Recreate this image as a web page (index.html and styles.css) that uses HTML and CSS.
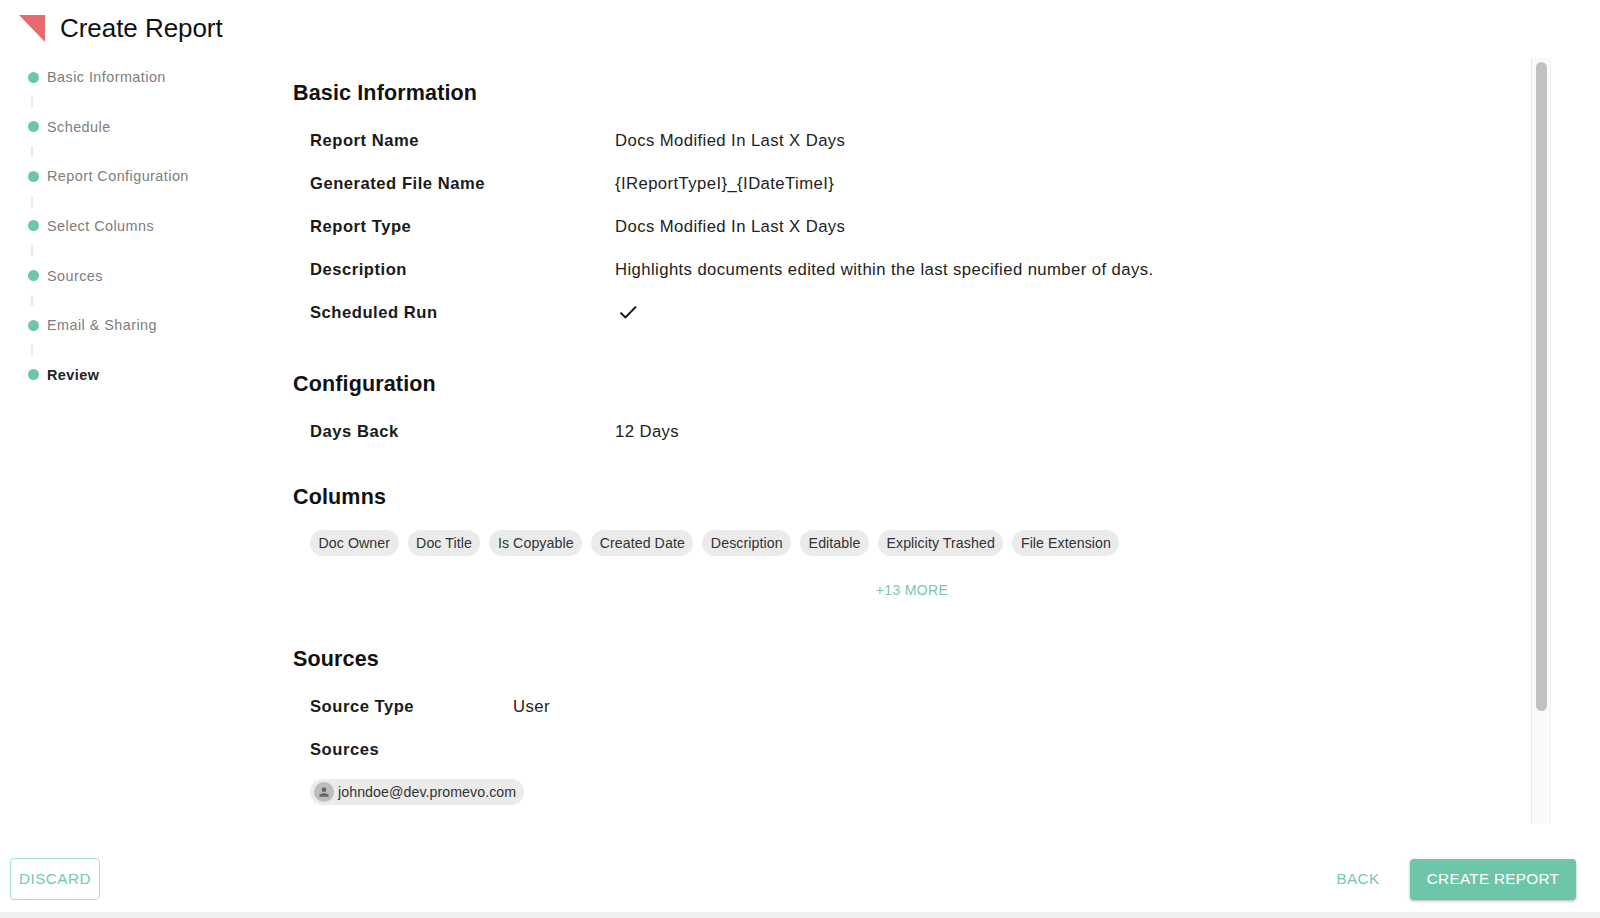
FILE: index.html
```html
<!DOCTYPE html>
<html lang="en">
<head>
<meta charset="utf-8">
<title>Create Report</title>
<link rel="stylesheet" href="styles.css">
</head>
<body>
<div class="page">
  <header class="header">
    <svg class="logo" width="26" height="27" viewBox="0 0 26 27"><polygon points="0,0 26,0 26,27" fill="#e96a6a"/></svg>
    <h1 class="title">Create Report</h1>
  </header>
  <div class="body">
    <nav class="steps">
      <div class="step"><span class="dot"></span>Basic Information</div>
      <div class="line"></div>
      <div class="step"><span class="dot"></span>Schedule</div>
      <div class="line"></div>
      <div class="step"><span class="dot"></span>Report Configuration</div>
      <div class="line"></div>
      <div class="step"><span class="dot"></span>Select Columns</div>
      <div class="line"></div>
      <div class="step"><span class="dot"></span>Sources</div>
      <div class="line"></div>
      <div class="step"><span class="dot"></span>Email &amp; Sharing</div>
      <div class="line"></div>
      <div class="step active"><span class="dot"></span>Review</div>
    </nav>
    <main class="content">
      <section class="section s-basic">
        <h2>Basic Information</h2>
        <div class="row"><div class="label">Report Name</div><div class="value">Docs Modified In Last X Days</div></div>
        <div class="row"><div class="label">Generated File Name</div><div class="value">{IReportTypeI}_{IDateTimeI}</div></div>
        <div class="row"><div class="label">Report Type</div><div class="value">Docs Modified In Last X Days</div></div>
        <div class="row"><div class="label">Description</div><div class="value">Highlights documents edited within the last specified number of days.</div></div>
        <div class="row"><div class="label">Scheduled Run</div><div class="value"><svg class="check" width="24" height="24" viewBox="0 0 24 24"><path d="M4.5 12.6 9.4 17.4 20 6.6" fill="none" stroke="#111" stroke-width="2"/></svg></div></div>
      </section>
      <section class="section s-config">
        <h2>Configuration</h2>
        <div class="row"><div class="label">Days Back</div><div class="value">12 Days</div></div>
      </section>
      <section class="section s-columns">
        <h2>Columns</h2>
        <div class="chips">
          <span class="chip">Doc Owner</span>
          <span class="chip">Doc Title</span>
          <span class="chip">Is Copyable</span>
          <span class="chip">Created Date</span>
          <span class="chip">Description</span>
          <span class="chip">Editable</span>
          <span class="chip">Explicity Trashed</span>
          <span class="chip">File Extension</span>
        </div>
        <div class="more">+13 MORE</div>
      </section>
      <section class="section s-sources">
        <h2>Sources</h2>
        <div class="row narrow"><div class="label">Source Type</div><div class="value">User</div></div>
        <div class="row narrow"><div class="label">Sources</div></div>
        <div class="chips user-chips">
          <span class="chip user"><span class="avatar"><svg width="14" height="14" viewBox="0 0 24 24"><path d="M12 12a4 4 0 1 0 0-8 4 4 0 0 0 0 8Zm0 2c-2.7 0-8 1.3-8 4v2h16v-2c0-2.7-5.3-4-8-4Z" fill="#666"/></svg></span>johndoe@dev.promevo.com</span>
        </div>
      </section>
    </main>
    <div class="track"><div class="thumb"></div></div>
  </div>
  <footer class="footer">
    <button class="btn outline">DISCARD</button>
    <div class="footer-right">
      <button class="btn text">BACK</button>
      <button class="btn primary">CREATE REPORT</button>
    </div>
  </footer>
  <div class="strip"></div>
</div>
</body>
</html>
```
FILE: styles.css
```css
* { box-sizing: border-box; }
html, body { margin: 0; height: 100%; overflow: hidden; background: #fff; }
body { font-family: "Liberation Sans", Arial, sans-serif; color: #111; }
.page { height: 918px; display: flex; flex-direction: column; }
.header { height: 58px; flex: none; display: flex; align-items: flex-start; padding: 15px 0 0 19px; }
.logo { flex: none; }
.title { margin: 0 0 0 15px; font-size: 26px; line-height: 27px; font-weight: 400; letter-spacing: -.05px; color: #111; }
.body { flex: 1; min-height: 0; display: flex; }
.steps { width: 293px; flex: none; padding: 9.7px 0 0 28px; }
.step { height: 19px; display: flex; align-items: center; font-size: 14.4px; letter-spacing: .45px; color: #7d7d7d; }
.step.active { color: #222; font-weight: 700; }
.dot { width: 11px; height: 11px; border-radius: 50%; background: #6dc6aa; margin-right: 8px; flex: none; }
.line { width: 2px; height: 11px; margin: 10px 0 9.6px 3px; background: #e9e9e9; }
.content { flex: 1; min-width: 0; padding-top: 23px; overflow: hidden; }
.section h2 { margin: 0; font-size: 21.5px; line-height: 25px; font-weight: 700; letter-spacing: .15px; color: #111; }
.row { display: flex; align-items: center; height: 26px; margin-left: 17px; margin-top: 17px; font-size: 16.7px; letter-spacing: .41px; }
.section h2 + .row { margin-top: 22px; }
.label { width: 305px; flex: none; font-weight: 700; color: #1a1a1a; font-size: 16.6px; letter-spacing: .52px; }
.value { color: #222; }
.narrow .label { width: 203px; }
.check { display: block; margin: 0 0 2px 1px; }
.s-config { margin-top: 46px; }
.s-columns { margin-top: 40px; }
.s-sources { margin-top: 49px; }
.chips { display: flex; gap: 9px; margin: 20px 0 0 17px; }
.chip { height: 26px; display: inline-flex; align-items: center; padding: 0 8.5px; border-radius: 13px; background: #ebebeb; font-size: 14.2px; letter-spacing: .07px; color: #333; white-space: nowrap; }
.more { margin: 26px 0 0 0; text-align: center; font-size: 14px; line-height: 16px; letter-spacing: .35px; color: #76c9af; }
.user-chips { margin-top: 16px; }
.user { padding: 0 8px 0 4px; }
.avatar { width: 20px; height: 20px; border-radius: 50%; background: #bdbdbd; display: flex; align-items: center; justify-content: center; margin-right: 4px; }
.track { width: 20px; flex: none; margin-right: 49px; background: #fafafa; border-left: 1px solid #e8e8e8; border-right: 1px solid #f0f0f0; padding: 4px 3px 0 4px; }
.thumb { height: 649px; border-radius: 6px; background: #c1c1c1; }
.footer { flex: none; height: 88px; display: flex; align-items: center; justify-content: space-between; padding: 22px 24px 0 10px; }
.footer-right { display: flex; align-items: center; gap: 14px; }
.btn { font-family: inherit; font-size: 15.3px; letter-spacing: .3px; border-radius: 4px; height: 41px; cursor: pointer; background: none; border: 0; }
.outline { width: 90px; height: 42px; padding: 0; color: #76c9af; border: 1px solid #a9dfcd; letter-spacing: .42px; }
.text { width: 76px; padding: 0; color: #76c9af; }
.primary { width: 166px; padding: 0; background: #6dc6aa; color: #fff; box-shadow: 0 1px 3px rgba(0,0,0,.3); }
.strip { flex: none; height: 6px; background: #f0f0f0; }
```
